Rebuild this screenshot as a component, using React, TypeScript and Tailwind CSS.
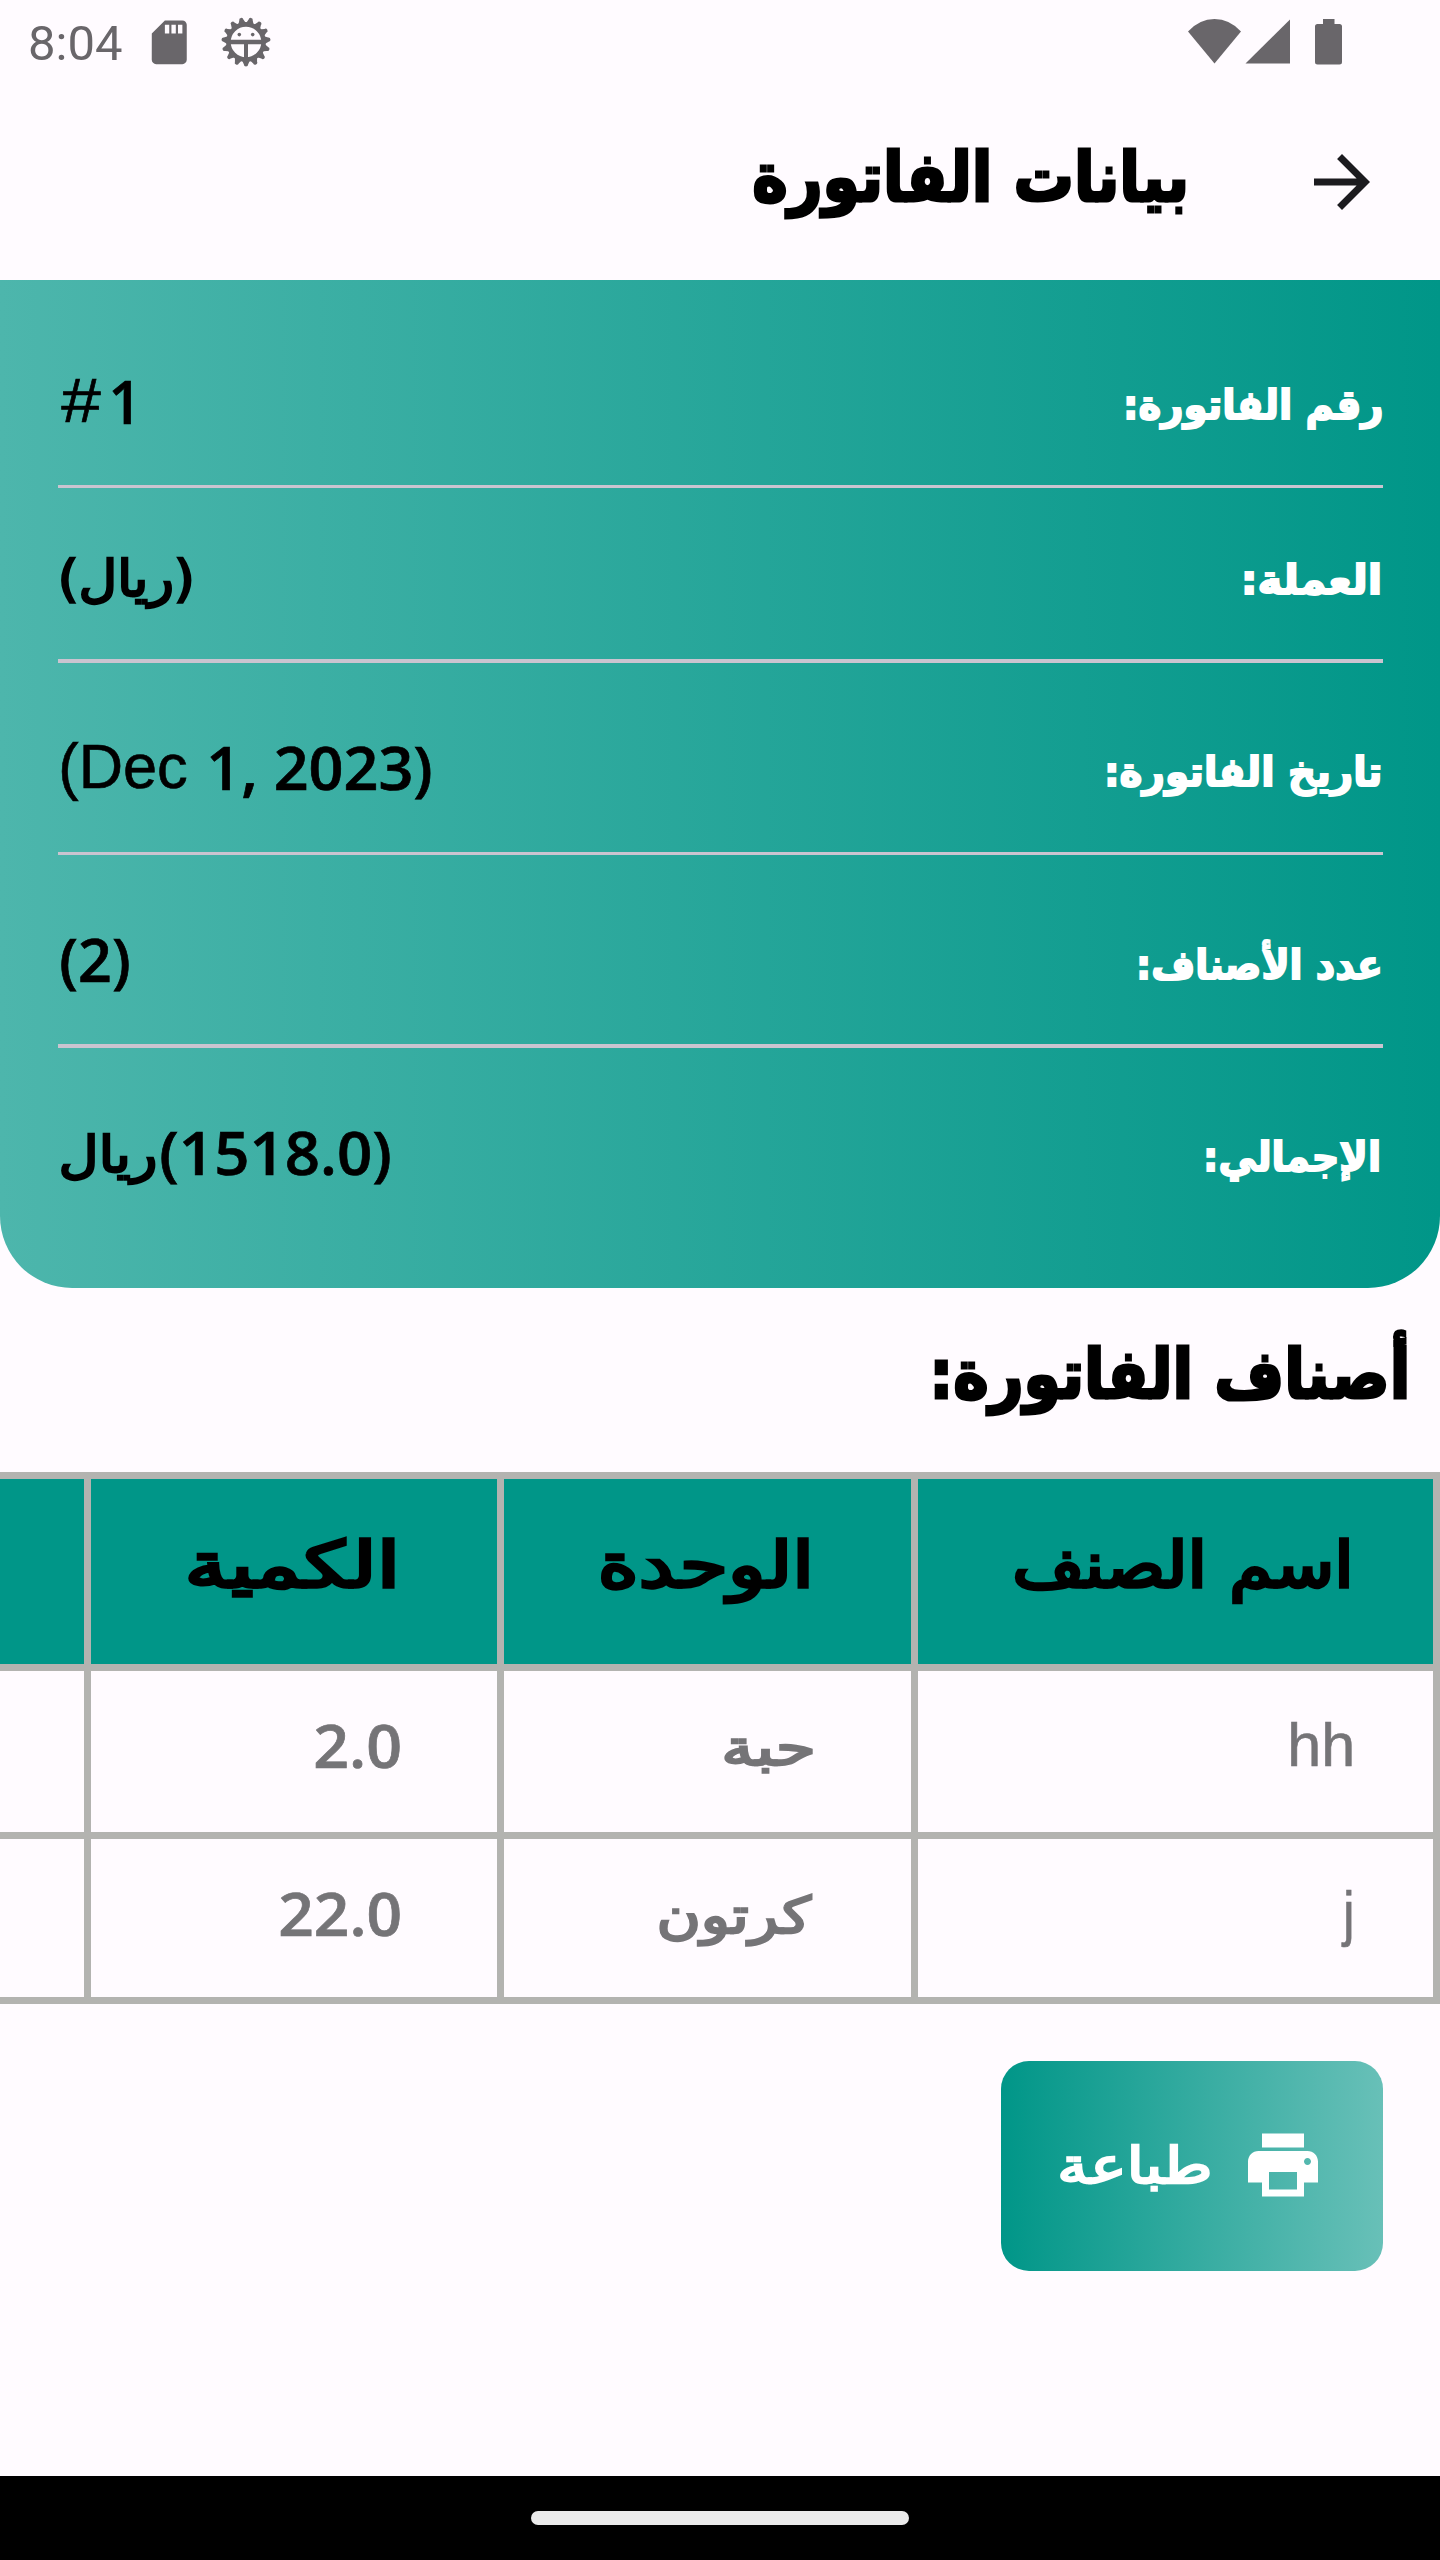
import { useLayoutEffect, useRef, useState } from "react";
import { MdPrint, MdSdCard } from "react-icons/md";

const ARABIC = "font-['DejaVu_Sans',sans-serif]";
const HUMANIST = "font-['Open_Sans',sans-serif] font-semibold [-webkit-text-stroke:0.700px]";
const GROTESK = "font-['Liberation_Sans',sans-serif] [-webkit-text-stroke:0.600px]";

type FitProps = { text: string; width: number; cap: number; face?: string; className?: string };

/* A line of text whose ink spans `width`, with capitals (or alefs) `cap` high.
   The box is 80px high and its baseline lies 60px below its top. */
function Fit({ text, width, cap, face = ARABIC, className = "" }: FitProps) {
  const ref = useRef<HTMLSpanElement>(null);
  const [transform, setTransform] = useState("none");
  const arabic = /[\u0600-\u06ff]/.test(text);
  useLayoutEffect(() => {
    const ctx = document.createElement("canvas").getContext("2d");
    if (!ref.current || !ctx) return;
    const s = getComputedStyle(ref.current);
    const stroke = parseFloat(s.getPropertyValue("-webkit-text-stroke-width")) || 0;
    ctx.font = `${s.fontWeight} ${s.fontSize} ${s.fontFamily}`;
    ctx.textAlign = "left";
    ctx.direction = arabic ? "rtl" : "ltr";
    const m = ctx.measureText(text);
    const c = ctx.measureText(arabic ? "ا" : "1");
    const sx = width / (m.actualBoundingBoxLeft + m.actualBoundingBoxRight + stroke);
    const sy = cap / (c.actualBoundingBoxAscent + stroke);
    const dx = m.actualBoundingBoxLeft + stroke / 2;
    const dy = 40 + (m.fontBoundingBoxAscent - m.fontBoundingBoxDescent) / 2 + stroke / 2;
    setTransform(`translateY(60px) scale(${sx}, ${sy}) translate(${dx}px, ${-dy}px)`);
  }, [text, width, cap, arabic]);
  return (
    <div dir="ltr" className="flex h-20 shrink-0" style={{ width }}>
      <span
        ref={ref}
        dir={arabic ? "rtl" : "ltr"}
        className={`block h-20 shrink-0 origin-top-left text-[60px] leading-[80px] whitespace-nowrap ${face} ${className}`}
        style={{ transform }}
      >
        {text}
      </span>
    </div>
  );
}

function DebugIcon() {
  const teeth = Array.from({ length: 15 }, (_, i) => i * 24);
  return (
    <svg viewBox="-25 -25 50 50" className="h-[50px] w-[50px]" fill="currentColor">
      {teeth.map((a) => (
        <path key={a} d="M-4.500-17L-2.100-22.500A2.100 2.100 0 0 1 2.100-22.500L4.500-17z" transform={`rotate(${a + 180})`} />
      ))}
      <circle r="17.600" fill="none" stroke="currentColor" strokeWidth="4.600" />
      <circle cx="-6.700" cy="-7.400" r="1.800" />
      <circle cx="6.700" cy="-7.400" r="1.800" />
      <path d="M-17-2.200H17V2.200H2V17H-2V2.200H-17z" />
    </svg>
  );
}

function StatusBar() {
  return (
    <div dir="ltr" className="flex h-[84px] items-start text-[#69666a]">
      <span className="ml-[28px] mt-[15px] font-['Roboto',sans-serif] text-[49px] leading-[58px]">8:04</span>
      <MdSdCard className="ml-[21px] mt-[15.500px] size-[52.500px]" />
      <div className="ml-[25px] mt-[17px]"><DebugIcon /></div>
      <svg viewBox="0 0 154 46" className="ml-auto mr-[98px] mt-[19px] h-[46px] w-[154px]" fill="currentColor">
        <path d="M0 12.500Q11.500 0 26.500 0T53 12.500L26.500 44.500z" />
        <path d="M102 .5V44.500H57.500z" />
        <path d="M135 0h11.500v5h5a2.500 2.500 0 0 1 2.500 2.500V43a2.500 2.500 0 0 1-2.500 2.500h-22A2.500 2.500 0 0 1 127 43V7.500A2.500 2.500 0 0 1 129.500 5h5.500z" />
      </svg>
    </div>
  );
}

type Part = FitProps & { gap?: string };
const medium = "[-webkit-text-stroke:2.800px]";

const rows: { label: string; labelWidth: number; height: string; end: string; labelTop: string; valueTop: string; parts: Part[] }[] = [
  {
    label: "رقم الفاتورة:", labelWidth: 256, height: "h-[204.500px]", end: "pr-[58px]", labelTop: "mt-[79.500px]", valueTop: "mt-[84px]",
    parts: [
      { text: "#", width: 41, cap: 43.5, face: GROTESK, gap: "mr-[10px] -mt-[1.500px]" },
      { text: "1", width: 19, cap: 44, face: HUMANIST },
    ],
  },
  {
    label: "العملة:", labelWidth: 136, height: "h-[171px]", end: "pr-[60px]", labelTop: "mt-[46.500px]", valueTop: "mt-[48.500px]",
    parts: [{ text: "(ريال)", width: 131, cap: 41, className: medium }],
  },
  {
    label: "تاريخ الفاتورة:", labelWidth: 274, height: "h-[189px]", end: "pr-[59px]", labelTop: "mt-[64.500px]", valueTop: "mt-[67.500px]",
    parts: [
      { text: "(Dec", width: 126, cap: 43.5, face: GROTESK, gap: "mr-[23px] -mt-px" },
      { text: "1, 2023)", width: 221, cap: 44, face: HUMANIST },
    ],
  },
  {
    label: "عدد الأصناف:", labelWidth: 241, height: "h-[189px]", end: "pr-[60px]", labelTop: "mt-[64.500px]", valueTop: "mt-[67px]",
    parts: [{ text: "(2)", width: 68, cap: 44, face: HUMANIST }],
  },
  {
    label: "الإجمالي:", labelWidth: 173, height: "h-[240px]", end: "pr-[61px]", labelTop: "mt-[64.500px]", valueTop: "mt-[67.500px]",
    parts: [
      { text: "ريال", width: 95, cap: 41, className: medium, gap: "mr-[5px] -mt-[2px]" },
      { text: "(1518.0)", width: 229, cap: 44, face: HUMANIST },
    ],
  },
];

function InvoiceCard() {
  return (
    <section className="h-[1008px] rounded-b-[72px] bg-linear-to-r/srgb from-[#4db6ac] to-[#009688]">
      {rows.map((r, i) => (
        <div key={r.label}>
          {i > 0 && <div className="mx-[57.500px] h-[3.500px] bg-[#cac4d0]" />}
          <div className={`flex items-start justify-between pl-[61px] ${r.height} ${r.end}`}>
            <div className={r.labelTop}>
              <Fit text={r.label} width={r.labelWidth} cap={33} className="font-bold text-white [-webkit-text-stroke:2.800px]" />
            </div>
            <div dir="ltr" className={`flex ${r.valueTop}`}>
              {r.parts.map((p) => (
                <div key={p.text} className={p.gap}><Fit {...p} /></div>
              ))}
            </div>
          </div>
        </div>
      ))}
    </section>
  );
}

const cellBorder = "border-l-[7px] border-[#b3b3b0]";
const heading = "font-bold [-webkit-text-stroke:2.600px]";

function ItemsTable() {
  const header = [
    { text: "اسم الصنف", width: 336, pad: "pr-[83px]" },
    { text: "الوحدة", width: 209, pad: "pr-[101px]" },
    { text: "الكمية", width: 208, pad: "pr-[101px]" },
  ];
  const items = [
    [
      { text: "hh", width: 61, cap: 43, face: GROTESK, pad: "pr-[81px] pt-[36px]" },
      { text: "حبة", width: 89, cap: 41, className: medium, pad: "pr-[98px] pt-[35px]" },
      { text: "2.0", width: 85, cap: 44, face: HUMANIST, pad: "pr-[97px] pt-[37px]" },
    ],
    [
      { text: "j", width: 11, cap: 43, face: GROTESK, pad: "pr-[81px] pt-[36px]" },
      { text: "كرتون", width: 154, cap: 41, className: medium, pad: "pr-[98px] pt-[35px]" },
      { text: "22.0", width: 120, cap: 44, face: HUMANIST, pad: "pr-[97px] pt-[37px]" },
    ],
  ];
  const cols = "grid grid-cols-[522px_414.500px_412.500px_84px]";
  return (
    <div className="mt-[184px] h-[532px] border-y-[7px] border-r-[7px] border-[#b3b3b0]">
      <div className={`${cols} h-[185px] bg-[#009688]`}>
        {header.map((h) => (
          <div key={h.text} className={`${cellBorder} ${h.pad} pt-[50px]`}>
            <Fit text={h.text} width={h.width} cap={52} className="[-webkit-text-stroke:3.200px]" />
          </div>
        ))}
      </div>
      {items.map((row, i) => (
        <div key={i} className={`${cols} border-t-[7px] border-[#b3b3b0] text-[#757477] ${i === 0 ? "h-[168px]" : "h-[165px]"}`}>
          {row.map(({ pad, ...cell }) => (
            <div key={cell.text} className={`${cellBorder} ${pad}`}>
              <Fit {...cell} />
            </div>
          ))}
        </div>
      ))}
    </div>
  );
}

export default function App() {
  return (
    <div dir="rtl" className="flex h-[2560px] w-[1440px] flex-col overflow-hidden bg-[#fffbff] text-black">
      <StatusBar />
      <header className="flex h-[196px] items-start pr-[56px]">
        <svg viewBox="0 0 24 24" className="mt-[56px] size-[84px]" fill="#1c1b1f">
          <path d="M12 4l-1.410 1.410L16.170 11H4v2h12.170l-5.580 5.590L12 20l8-8z" />
        </svg>
        <div className="mr-[114px] mt-[58px]">
          <Fit text="بيانات الفاتورة" width={433} cap={55} className={heading} />
        </div>
      </header>
      <InvoiceCard />
      <div className="-mb-[131px] mr-[33px] mt-[51px]">
        <Fit text="أصناف الفاتورة:" width={473} cap={55} className={heading} />
      </div>
      <ItemsTable />
      <button className="mr-[57.500px] mt-[57px] flex h-[210px] w-[382px] items-start rounded-[28px] bg-linear-to-r/srgb from-[#009688] to-[#68c0b8] pr-[58px] text-white">
        <MdPrint className="mt-[62px] size-[84px]" />
        <div className="mr-[31px] mt-[63px]">
          <Fit text="طباعة" width={150} cap={41} className={medium} />
        </div>
      </button>
      <footer className="mt-auto flex h-[84px] justify-center bg-black pt-[35px]">
        <div className="h-[14px] w-[378px] rounded-[7px] bg-[#ebebeb]" />
      </footer>
    </div>
  );
}
